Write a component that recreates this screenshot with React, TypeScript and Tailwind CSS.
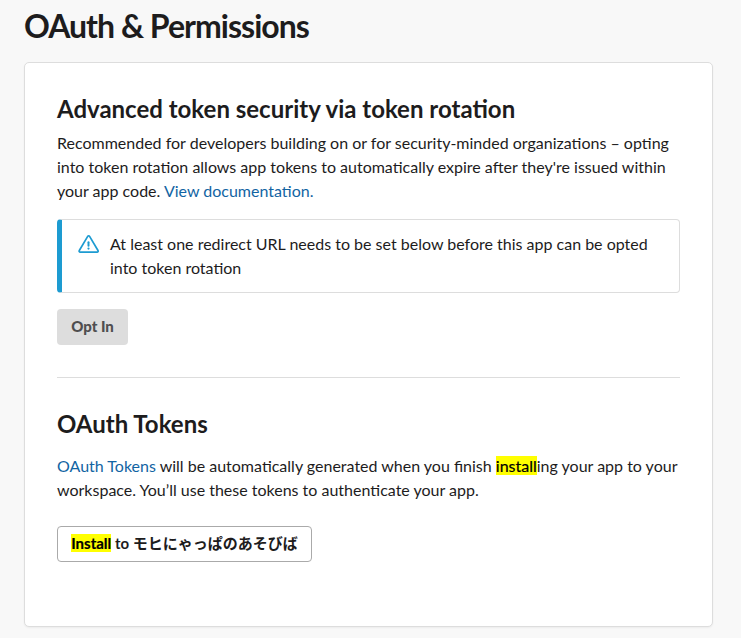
import type { ReactNode } from 'react'

function Mark({ children }: { children: ReactNode }) {
  return <mark className="bg-[#ffff00] text-black [-webkit-text-stroke:0.2px_black]">{children}</mark>
}

function WarningIcon() {
  return (
    <svg className="mt-[2px] h-5 w-[22px] shrink-0" viewBox="0 0 22 20" fill="none" stroke="#1d9bd1" strokeWidth="1.7" strokeLinecap="round" strokeLinejoin="round">
      <path d="M9.7 2.4a1.1 1.1 0 0 1 1.9 0l8.4 14.1a1.1 1.1 0 0 1-.9 1.7H2.2a1.1 1.1 0 0 1-.9-1.7Z" />
      <path d="M10.5 8.2v3.5" strokeWidth="2" />
      <circle cx="10.5" cy="14.6" r="1.1" fill="#1d9bd1" stroke="none" />
    </svg>
  )
}

export default function App() {
  return (
    <div className="h-[638px] w-[741px] overflow-hidden bg-[#f8f8f8] px-6 pt-[5px] pr-7 font-['Lato','Noto_Sans_CJK_JP',sans-serif] text-[16px] leading-6 text-[#1d1c1d]">
      <h1 className="text-[32px] leading-[42px] font-bold tracking-[-0.98px]">OAuth &amp; Permissions</h1>

      <main className="mt-[15px] h-[565px] rounded-[5px] border border-[#dddddd] bg-white px-8 pt-[31px] shadow-[0_1px_2px_rgba(0,0,0,0.05)]">
        <section>
          <h2 className="text-[24px] leading-[30px] font-bold">Advanced token security via token rotation</h2>
          <p className="mt-[7px]">
            Recommended for developers building on or for security-minded organizations – opting
            <br />
            into token rotation allows app tokens to automatically expire after they're issued within
            <br />
            your app code.
            {' '}
            <a className="text-[#1264a3]">View documentation.</a>
          </p>
          <div className="mt-4 flex h-[74px] gap-[10px] rounded border border-l-[5px] border-[#dddddd] border-l-[#1d9bd1] pt-3 pl-4">
            <WarningIcon />
            <p>
              At least one redirect URL needs to be set below before this app can be opted
              <br />
              into token rotation
            </p>
          </div>
          <button className="mt-4 h-9 w-[71px] rounded bg-[#dddddd] pb-[2px] text-[15px] font-black text-[#4f4e4f]">Opt In</button>
        </section>

        <section className="mt-8 border-t border-[#dddddd] pt-[31px]">
          <h2 className="text-[24px] leading-[30px] font-bold">OAuth Tokens</h2>
          <p className="mt-[15px]">
            <a className="text-[#1264a3]">OAuth Tokens</a>
            {' '}
            will be automatically generated when you finish
            {' '}
            <Mark>install</Mark>
            ing your app to your
            <br />
            workspace. You’ll use these tokens to authenticate your app.
          </p>
          <button className="mt-6 h-9 w-[255px] rounded border border-[#aaaaaa] pb-[2px] text-[15px] font-bold">
            <Mark>Install</Mark>
            {' to モヒにゃっぱのあそびば'}
          </button>
        </section>
      </main>
    </div>
  )
}
